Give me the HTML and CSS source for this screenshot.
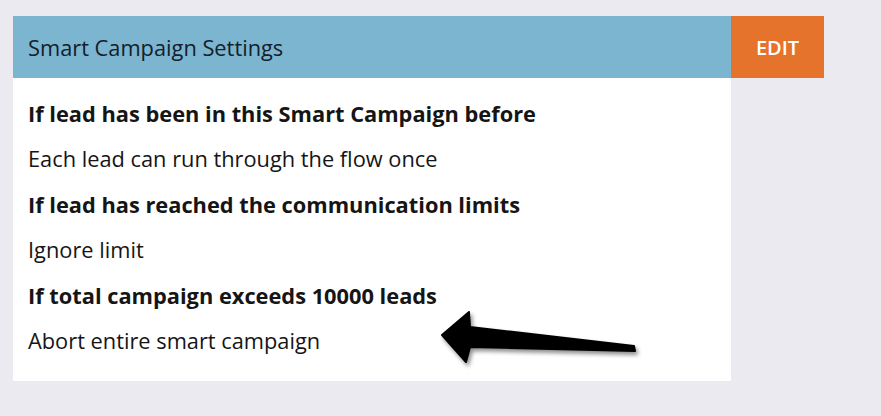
FILE: index.html
```html
<!DOCTYPE html>
<html>
<head>
<meta charset="utf-8">
<link rel="stylesheet" href="styles.css">
</head>
<body>
<div class="card">
  <div class="header">
    <div class="title">Smart Campaign Settings</div>
    <div class="edit">EDIT</div>
  </div>
  <div class="panel">
    <div class="row bold">If lead has been in this Smart Campaign before</div>
    <div class="row">Each lead can run through the flow once</div>
    <div class="row bold">If lead has reached the communication limits</div>
    <div class="row">Ignore limit</div>
    <div class="row bold">If total campaign exceeds 10000 leads</div>
    <div class="row">Abort entire smart campaign</div>
    <svg class="arrow" width="210" height="62" viewBox="0 0 210 62">
      <polygon points="4,27 31,4 32,19 196,38 197,43 32,39 28,54" fill="#000" stroke="#000" stroke-width="2" stroke-linejoin="round"/>
    </svg>
  </div>
</div>
</body>
</html>
```
FILE: styles.css
```css
html, body {
  margin: 0;
  padding: 0;
}
body {
  background: #ebeaf0;
  width: 881px;
  height: 416px;
  overflow: hidden;
  font-family: "Open Sans", "Liberation Sans", sans-serif;
  color: #151515;
}
.card {
  margin: 16px 0 0 13px;
  width: 811px;
}
.header {
  display: flex;
  height: 62px;
}
.title {
  width: 718px;
  background: #7bb5d0;
  box-sizing: border-box;
  padding-left: 15px;
  display: flex;
  align-items: center;
  font-size: 21.8px;
  color: #14202a;
}
.edit {
  width: 93px;
  background: #e5732b;
  color: #fff;
  display: flex;
  align-items: center;
  justify-content: center;
  font-size: 20px;
  font-weight: 600;
}
.panel {
  position: relative;
  width: 718px;
  height: 303px;
  box-sizing: border-box;
  background: #fff;
  padding: 13px 0 0 15px;
}
.row {
  height: 45.4px;
  line-height: 45.4px;
  font-size: 21.8px;
  white-space: nowrap;
}
.bold {
  font-weight: 700;
}
.arrow {
  position: absolute;
  left: 425px;
  top: 230px;
  filter: drop-shadow(2px 3px 2px rgba(0,0,0,0.45));
}
```
